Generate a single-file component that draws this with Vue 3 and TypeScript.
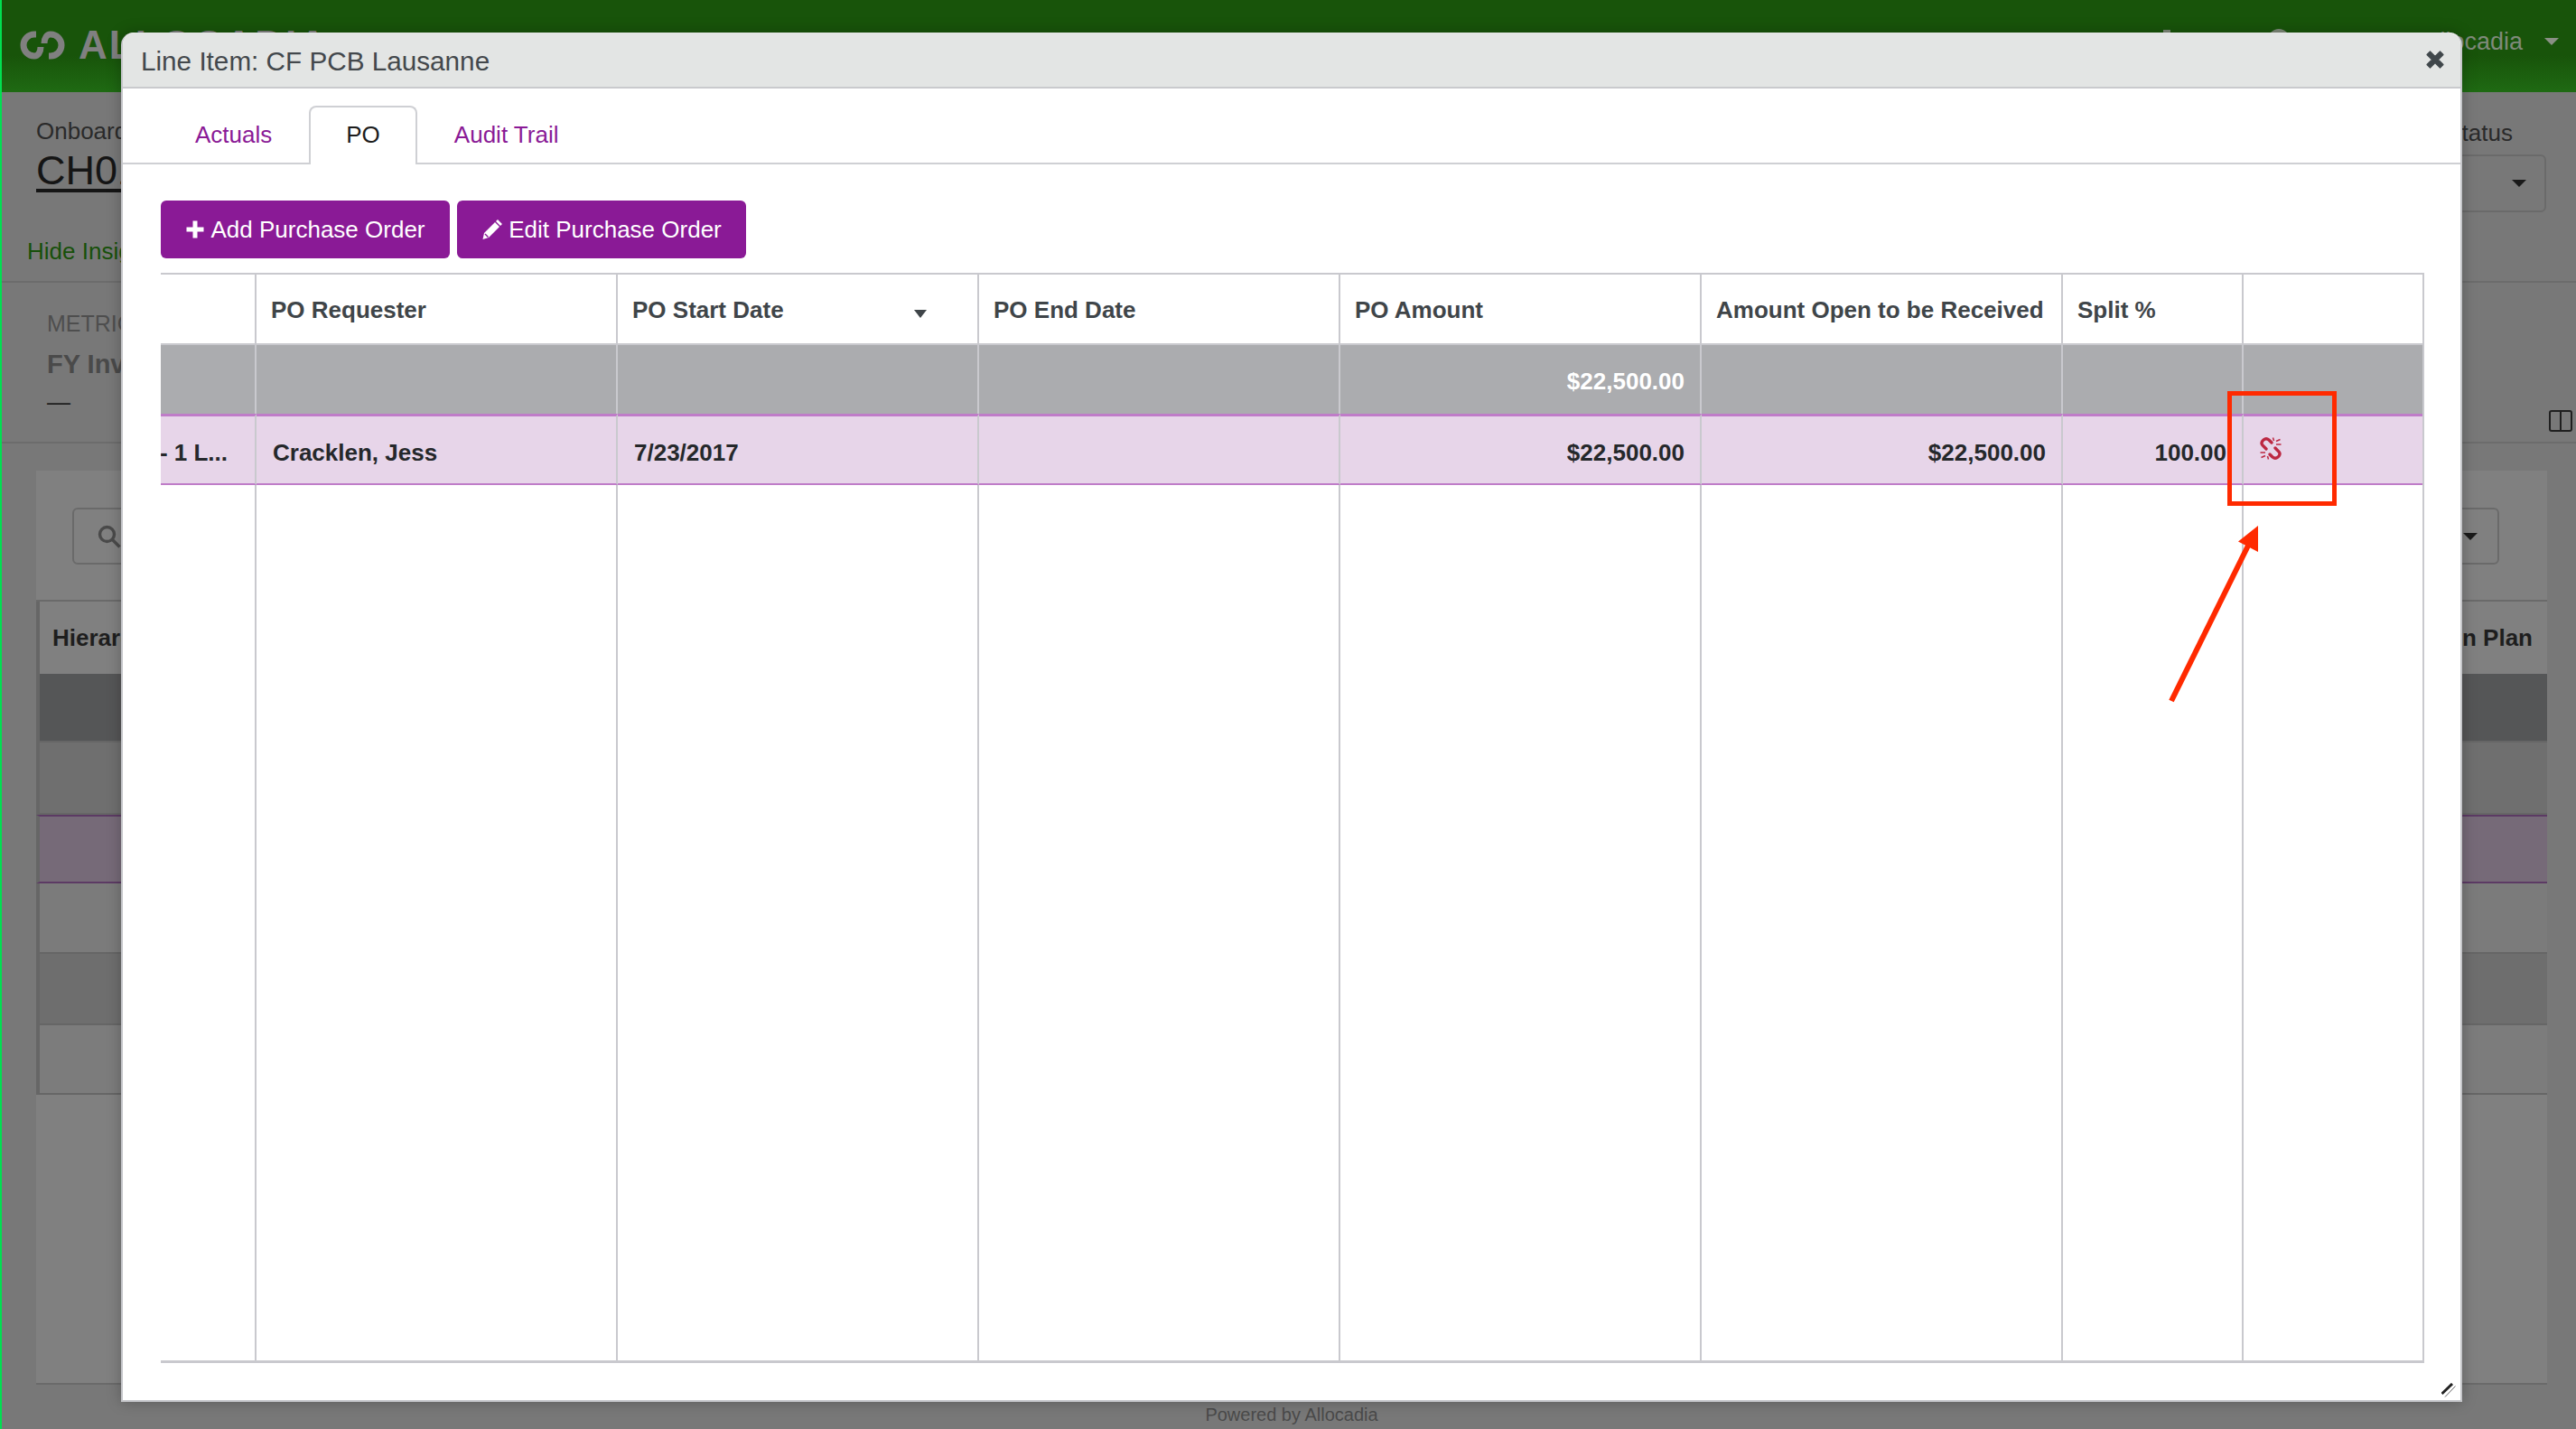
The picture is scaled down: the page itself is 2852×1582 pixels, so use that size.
<script setup lang="ts">
import { ref } from 'vue';

interface Column {
  key: string;
  label: string;
  sorted?: boolean;
}

const columns: Column[] = [
  { key: 'name', label: '' },
  { key: 'requester', label: 'PO Requester' },
  { key: 'start', label: 'PO Start Date', sorted: true },
  { key: 'end', label: 'PO End Date' },
  { key: 'amount', label: 'PO Amount' },
  { key: 'open', label: 'Amount Open to be Received' },
  { key: 'split', label: 'Split %' },
  { key: 'action', label: '' },
];

const tabs = ['Actuals', 'PO', 'Audit Trail'];
const activeTab = ref('PO');

const rightAligned = ['amount', 'open', 'split'];

const totals: Record<string, string> = { amount: '$22,500.00' };
const row: Record<string, string> = {
  name: '- 1 L...',
  requester: 'Cracklen, Jess',
  start: '7/23/2017',
  amount: '$22,500.00',
  open: '$22,500.00',
  split: '100.00',
};

const backRows = ['dark', 'mid', 'picked', 'plain', 'mid2', 'plain2'];
</script>

<template>
  <div class="shell">
    <header class="topbar">
      <svg class="logo" viewBox="-1 -1 50 34" fill="none" stroke="#808080" stroke-width="7">
        <path d="M17 4 H15 A12 12 0 0 0 15 28 C19 28 22 24 22 18" />
        <path d="M31 28 H33 A12 12 0 0 0 33 4 C29 4 26 8 26 14" />
      </svg>
      <span class="brand">ALLOCADIA</span>
      <span class="spacer"></span>
      <span class="nav-mark"></span>
      <span class="nav-circle"></span>
      <span class="user">Allocadia</span>
      <span class="caret caret-light"></span>
    </header>

    <section class="summary">
      <div class="summary-left">
        <div class="small-label">Onboarding</div>
        <div class="plan-name">CH01</div>
        <div class="hide-link">Hide Insights</div>
      </div>
      <div class="summary-right">
        <div class="small-label">Status</div>
        <div class="select status-select"><span class="caret"></span></div>
      </div>
    </section>

    <section class="metrics">
      <div class="metric-label">METRICS</div>
      <div class="metric-name">FY Investment</div>
      <div class="metric-value">—</div>
      <svg class="columns-icon" viewBox="0 0 26 24" fill="none" stroke="#1f1f1f" stroke-width="2">
        <rect x="1" y="1" width="24" height="22" rx="2" />
        <path d="M13 1v22" />
      </svg>
    </section>

    <section class="panel">
      <div class="panel-tools">
        <div class="search">
          <svg viewBox="0 0 26 26" fill="none" stroke="#4a4a4a" stroke-width="3.4">
            <circle cx="10.5" cy="10.5" r="8" />
            <path d="M16.5 16.5l8 8" />
          </svg>
        </div>
        <div class="select tools-select"><span class="caret"></span></div>
      </div>
      <div class="back-head">
        <span>Hierarchy</span>
        <span>Execution Plan</span>
      </div>
      <div v-for="name in backRows" :key="name" class="back-row" :class="name"></div>
    </section>

    <footer class="powered">Powered by Allocadia</footer>

    <div class="modal">
      <div class="modal-head">
        <span class="modal-title">Line Item: CF PCB Lausanne</span>
        <svg class="close" viewBox="0 0 20 20" fill="#40474b" stroke="#40474b" stroke-width="1.2" stroke-linejoin="round">
          <path d="M4.5 1 L10 6.5 L15.5 1 L19 4.5 L13.5 10 L19 15.5 L15.5 19 L10 13.5 L4.5 19 L1 15.5 L6.5 10 L1 4.5 Z" />
        </svg>
      </div>

      <nav class="tabs">
        <a v-for="tab in tabs" :key="tab" class="tab" :class="{ active: tab === activeTab }">{{ tab }}</a>
      </nav>

      <div class="actions">
        <button class="action-btn">
          <svg class="btn-icon" viewBox="0 0 22 22" fill="#fff">
            <path d="M8.5 1.5h5v7h7v5h-7v7h-5v-7h-7v-5h7z" />
          </svg>
          Add Purchase Order
        </button>
        <button class="action-btn">
          <svg class="btn-icon edit-icon" viewBox="0 0 24 24" fill="#fff">
            <path d="M18 1 L23 6 L21 8 L16 3 Z M15 4 L20 9 L8 21 L1.5 23 L3 16 Z" />
            <path d="M4 17 L7.5 20.5" stroke="#8a1a96" stroke-width="1.4" />
          </svg>
          Edit Purchase Order
        </button>
      </div>

      <div class="grid">
        <div class="grid-row head">
          <div v-for="col in columns" :key="col.key" class="cell">
            <span>{{ col.label }}</span>
            <span v-if="col.sorted" class="sort-caret"></span>
          </div>
        </div>
        <div class="grid-row total">
          <div
            v-for="col in columns"
            :key="col.key"
            class="cell"
            :class="{ right: rightAligned.includes(col.key) }"
          >
            {{ totals[col.key] }}
          </div>
        </div>
        <div class="grid-row item">
          <div
            v-for="col in columns"
            :key="col.key"
            class="cell"
            :class="[col.key, { right: rightAligned.includes(col.key) }]"
          >
            <svg v-if="col.key === 'action'" class="unlink" viewBox="0 0 24 25" fill="none" stroke="#bc2842">
              <path stroke-width="3.3" stroke-linecap="round" d="M7 13 L3 9 Q0.5 6 4 3 Q7 0.5 10 3 L13 6" />
              <path stroke-width="3.3" stroke-linecap="round" d="M17 12 L21 16 Q23.5 19 20 22 Q17 24.5 14 22 L11 19" />
              <path stroke-width="1.5" d="M14.5 0.5l1 3.5M18 4.5l4.5-2M18 8h5.5M9.5 24.5l-1-3.5M6 20.5l-4.5 2M6 17H0.5" />
            </svg>
            <template v-else>{{ row[col.key] }}</template>
          </div>
        </div>
        <div class="grid-row filler">
          <div v-for="col in columns" :key="col.key" class="cell"></div>
        </div>
      </div>

      <svg class="resize" viewBox="0 0 16 16" fill="none">
        <path d="M0.5 12 L12 1" stroke="#222" stroke-width="3" />
        <path d="M4 15.5 L15.5 3.5" stroke="#666" stroke-width="1" />
      </svg>
    </div>

    <div class="callout"></div>
    <svg class="callout-arrow" viewBox="0 0 120 210" fill="#ff2a00">
      <path d="M4 204 L90 30" stroke="#ff2a00" stroke-width="6" />
      <path d="M100 10 L100 39 L78 27.5 Z" />
    </svg>
  </div>
</template>

<style scoped>
.shell {
  position: relative;
  width: 2852px;
  height: 1582px;
  box-sizing: border-box;
  border-left: 2px solid #00e050;
  background: #787878;
  overflow: hidden;
  display: flex;
  flex-direction: column;
  font-family: "Liberation Sans", Arial, sans-serif;
  color: #1e1e1e;
}
.topbar {
  height: 102px;
  flex: none;
  box-sizing: border-box;
  display: flex;
  align-items: center;
  padding: 0 19px 2px 20px;
  background: linear-gradient(#18540a 0, #18540a 60%, #1f6a13 100%);
}
.logo {
  width: 50px;
  height: 34px;
  flex: none;
}
.brand {
  margin-left: 15px;
  font-size: 44px;
  font-weight: 700;
  letter-spacing: 2px;
  color: #808080;
}
.spacer {
  flex: 1;
}
.nav-mark {
  align-self: flex-start;
  width: 8px;
  height: 24px;
  margin: 33px 108px 0 0;
  background: #7f8a7a;
}
.nav-circle {
  align-self: flex-start;
  width: 24px;
  height: 24px;
  margin: 32px 148px 0 0;
  border-radius: 50%;
  background: #7f8a7a;
}
.user,
.caret-light {
  position: relative;
  top: -4px;
}
.user {
  font-size: 27px;
  color: #7f8a7a;
}
.caret {
  display: block;
  width: 0;
  height: 0;
  border-left: 8px solid transparent;
  border-right: 8px solid transparent;
  border-top: 8px solid #1a1a1a;
}
.caret-light {
  margin-left: 24px;
  border-top-color: #8a9085;
}
.summary {
  height: 211px;
  flex: none;
  box-sizing: border-box;
  display: flex;
  justify-content: space-between;
  padding: 28px 33px 0 38px;
  border-bottom: 2px solid #6c6c6c;
}
.small-label {
  font-size: 26px;
  color: #2a2a2a;
}
.plan-name {
  margin-top: 4px;
  font-size: 45px;
  line-height: 48px;
  color: #151515;
  text-decoration: underline;
  text-decoration-thickness: 4px;
  text-underline-offset: 5px;
}
.hide-link {
  margin: 50px 0 0 -10px;
  font-size: 26px;
  color: #17500a;
}
.summary-right {
  width: 320px;
}
.summary-right .small-label {
  margin-top: 2px;
  text-align: right;
  padding-right: 37px;
}
.select {
  box-sizing: border-box;
  display: flex;
  align-items: center;
  justify-content: flex-end;
  height: 63px;
  border: 2px solid #6a6a6a;
  border-radius: 6px;
}
.status-select {
  height: 64px;
  margin-top: 8px;
  padding-right: 20px;
}
.metrics {
  position: relative;
  height: 178px;
  flex: none;
  box-sizing: border-box;
  padding: 31px 0 0 50px;
  border-bottom: 2px solid #6c6c6c;
}
.metric-label {
  font-size: 25px;
  color: #4e4e4e;
}
.metric-name {
  margin-top: 14px;
  font-size: 29px;
  font-weight: 700;
  color: #4a4a4a;
}
.metric-value {
  margin-top: 10px;
  font-size: 26px;
  color: #1e1e1e;
}
.columns-icon {
  position: absolute;
  right: 4px;
  bottom: 11px;
  width: 26px;
  height: 24px;
}
.panel {
  margin: 30px 32px 0 38px;
  height: 1012px;
  flex: none;
  box-sizing: border-box;
  background: #808080;
  border-bottom: 2px solid #6a6a6a;
}
.panel-tools {
  height: 145px;
  box-sizing: border-box;
  display: flex;
  justify-content: space-between;
  padding: 41px 53px 0 40px;
  border-bottom: 2px solid #6a6a6a;
}
.search {
  width: 300px;
  height: 63px;
  box-sizing: border-box;
  border: 2px solid #6a6a6a;
  border-radius: 6px;
  padding: 17px 0 0 26px;
}
.search svg {
  display: block;
  width: 26px;
  height: 26px;
}
.tools-select {
  width: 300px;
  padding-right: 22px;
}
.back-head {
  height: 80px;
  box-sizing: border-box;
  display: flex;
  justify-content: space-between;
  align-items: center;
  padding: 0 16px 0 14px;
  font-size: 26px;
  font-weight: 700;
  color: #1e1e1e;
  border-left: 4px solid #666;
}
.back-row {
  height: 76px;
  box-sizing: border-box;
  border-left: 4px solid #666;
  border-bottom: 2px solid #666;
}
.back-row.dark {
  background: #555657;
}
.back-row.mid {
  background: #6f6f6f;
  height: 80px;
}
.back-row.picked {
  background: #766a78;
  border-top: 2px solid #5c3a64;
  border-bottom: 2px solid #5c3a64;
}
.back-row.plain {
  background: #7b7b7b;
  height: 78px;
}
.back-row.mid2 {
  background: #6e6e6e;
  height: 79px;
}
.back-row.plain2 {
  background: #7c7c7c;
  height: 77px;
}
.powered {
  margin-top: 22px;
  text-align: center;
  font-size: 20px;
  color: #4a4a4a;
  padding-left: 6px;
}
.modal {
  position: absolute;
  left: 132px;
  top: 36px;
  width: 2592px;
  height: 1516px;
  box-sizing: border-box;
  display: flex;
  flex-direction: column;
  background: #fff;
  border: 2px solid #c5c6ca;
  border-top: none;
  border-radius: 14px 14px 0 0;
  box-shadow: 0 0 16px rgba(0, 0, 0, 0.25);
}
.modal-head {
  height: 62px;
  flex: none;
  box-sizing: border-box;
  display: flex;
  align-items: center;
  justify-content: space-between;
  padding: 3px 18px 0 20px;
  background: #e3e5e4;
  border-bottom: 2px solid #c9cacd;
  border-radius: 14px 14px 0 0;
}
.modal-title {
  font-size: 29.7px;
  color: #43484c;
}
.close {
  width: 20px;
  height: 20px;
  margin-top: -3px;
}
.tabs {
  height: 84px;
  flex: none;
  box-sizing: border-box;
  display: flex;
  align-items: flex-end;
  padding-left: 40px;
  border-bottom: 2px solid #cfd0d4;
}
.tab {
  box-sizing: border-box;
  height: 62px;
  line-height: 62px;
  padding: 0 40px;
  margin-right: 2px;
  font-size: 26px;
  color: #8a1a96;
}
.tab.active {
  position: relative;
  top: 2px;
  height: 65px;
  padding: 0 39px;
  margin: 0 1px 0 -1px;
  line-height: 60px;
  background: #fff;
  color: #1c1c1c;
  border: 2px solid #cfd0d4;
  border-bottom: none;
  border-radius: 8px 8px 0 0;
}
.actions {
  display: flex;
  gap: 8px;
  flex: none;
  margin: 40px 0 16px 42px;
}
.action-btn {
  height: 64px;
  width: 320px;
  display: flex;
  align-items: center;
  justify-content: center;
  gap: 6px;
  padding: 0;
  border: none;
  border-radius: 6px;
  background: #8a1a96;
  color: #fff;
  font-family: inherit;
  font-size: 26px;
}
.btn-icon {
  width: 22px;
  height: 22px;
  flex: none;
}
.edit-icon {
  width: 24px;
  height: 24px;
}
.grid {
  margin-left: 42px;
  width: 2506px;
  height: 1207px;
  flex: none;
  box-sizing: border-box;
  display: flex;
  flex-direction: column;
  border-top: 2px solid #c9c9ce;
  border-right: 2px solid #c9c9ce;
  border-bottom: 3px solid #c9c9ce;
}
.grid-row {
  display: grid;
  grid-template-columns: 106px 400px 400px 400px 400px 400px 200px 198px;
  flex: none;
}
.cell {
  box-sizing: border-box;
  position: relative;
  border-right: 2px solid #c9c9ce;
  font-size: 26px;
  font-weight: 700;
  padding: 0 17px 0 16px;
  display: flex;
  align-items: center;
  white-space: nowrap;
}
.cell:last-child {
  border-right: none;
}
.cell.right {
  justify-content: flex-end;
}
.head {
  height: 76px;
  color: #3f4549;
}
.head .cell {
  padding-top: 3px;
}
.sort-caret {
  position: absolute;
  right: 56px;
  top: 39px;
  width: 0;
  height: 0;
  border-left: 7.5px solid transparent;
  border-right: 7.5px solid transparent;
  border-top: 9px solid #3f4549;
}
.total {
  height: 78px;
  background: #abacaf;
  color: #fff;
}
.total .cell {
  border-top: 2px solid #c9c9ce;
  padding-top: 5px;
}
.item {
  height: 79px;
  background: #e7d5e9;
  color: #25282b;
}
.item .cell {
  border-top: 3px solid #bf7cc8;
  border-bottom: 2px solid #bf7cc8;
  padding: 6px 17px 0 18px;
}
.item .cell.name {
  justify-content: flex-end;
  overflow: hidden;
  padding: 6px 30px 0 0;
}
.unlink {
  width: 24px;
  height: 25px;
  margin: -9px 0 0 0;
}
.filler {
  flex: 1;
}
.resize {
  position: absolute;
  right: 5px;
  bottom: 3px;
  width: 16px;
  height: 16px;
}
.callout {
  position: absolute;
  left: 2464px;
  top: 433px;
  width: 121px;
  height: 127px;
  box-sizing: border-box;
  border: 5px solid #ff2a00;
}
.callout-arrow {
  position: absolute;
  left: 2398px;
  top: 572px;
  width: 120px;
  height: 210px;
}
</style>

<style>
html,
body {
  margin: 0;
  background: #787878;
}
</style>
